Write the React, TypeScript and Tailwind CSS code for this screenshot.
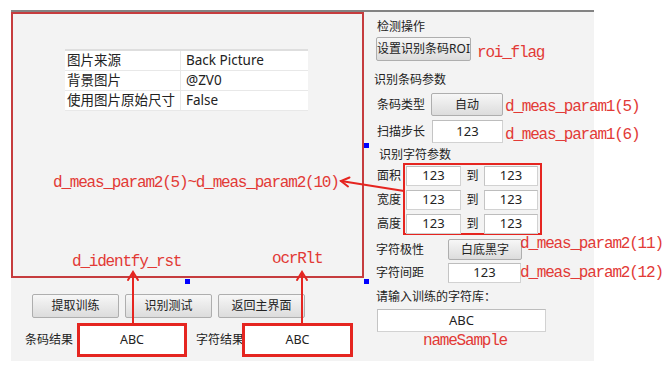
import React from "react";

const btn =
  "flex items-center justify-center whitespace-nowrap bg-linear-to-b from-[#f7f7f7] to-[#dcdcdc] border border-[#aeaeae] rounded-[2px] text-[12px] text-[#222]";
const input =
  "flex items-center justify-center bg-white border border-[#d2d2d2] border-t-[#bdbdbd] border-l-[#c4c4c4] text-[13px] text-[#222]";
const note =
  "absolute whitespace-nowrap font-['Liberation_Mono',monospace] text-[16px] leading-[18px] tracking-[-1.2px] text-[#e23a36]";

function Row({ label, children, w }: { label: string; children: React.ReactNode; w: string }) {
  return (
    <div className="flex items-center">
      <span className={`${w} text-[12px] leading-[16px]`}>{label}</span>
      {children}
    </div>
  );
}

export default function App() {
  return (
    <div className="relative w-[672px] h-[371px] bg-white overflow-hidden pl-[11px] pt-[10px] font-['Noto_Sans','Noto_Sans_CJK_SC',sans-serif] text-[#222]">
      <div className="w-[583px] h-[351px] bg-[#f3f3f3] border-t-2 border-[#838383] flex">
        {/* Left column */}
        <div className="w-[353px] flex flex-col">
          <div className="h-[266px] border-2 border-[#c63c3e]">
            <div className="mt-[35px] ml-[52px] w-[243px] bg-white border-t-2 border-[#dedede] text-[13.5px]">
              {[
                ["图片来源", "Back Picture"],
                ["背景图片", "@ZV0"],
                ["使用图片原始尺寸", "False"],
              ].map(([a, b]) => (
                <div key={a} className="flex h-[20px] border-b border-[#e8e8e8]">
                  <div className="w-[116px] pl-[2px] border-r border-[#e8e8e8] flex items-center whitespace-nowrap">{a}</div>
                  <div className="pl-[5px] flex items-center">{b}</div>
                </div>
              ))}
            </div>
          </div>
          <div className="mt-[16px] ml-[21px] flex gap-[6px]">
            <div className={`${btn} w-[87px] h-[24px]`}>提取训练</div>
            <div className={`${btn} w-[87px] h-[24px]`}>识别测试</div>
            <div className={`${btn} w-[87px] h-[24px]`}>返回主界面</div>
          </div>
          <div className="mt-[5px] flex items-center h-[34px]">
            <span className="ml-[14px] w-[48px] text-[12px]">条码结果</span>
            <div className="ml-[4px] w-[110px] h-[34px] border-[3px] border-[#e52520] bg-white flex items-center justify-center text-[12.5px]">ABC</div>
            <span className="ml-[9px] w-[46px] text-[12px] whitespace-nowrap">字符结果</span>
            <div className="w-[111px] h-[34px] border-[3px] border-[#e52520] bg-white flex items-center justify-center text-[12.5px]">ABC</div>
          </div>
        </div>

        {/* Right column */}
        <div className="w-[230px] flex flex-col">
          <div className="mt-[7px] ml-[13px] h-[16px] leading-[16px] text-[12px]">检测操作</div>
          <div className={`${btn} mt-[2px] ml-[12px] w-[95px] h-[24px]`}>设置识别条码ROI</div>
          <div className="mt-[11px] ml-[10px] h-[16px] leading-[16px] text-[12px]">识别条码参数</div>
          <div className="mt-[5px] ml-[13px]">
            <Row label="条码类型" w="w-[54px]">
              <div className={`${btn} w-[72px] h-[23px]`}>自动</div>
            </Row>
          </div>
          <div className="mt-[4px] ml-[13px]">
            <Row label="扫描步长" w="w-[55px]">
              <div className={`${input} w-[71px] h-[23px]`}>123</div>
            </Row>
          </div>
          <div className="mt-[5px] ml-[15px] h-[14px] leading-[14px] text-[12px]">识别字符参数</div>
          <div className="mt-[1px] ml-[13px] flex">
            <div className="w-[26px] flex flex-col pt-[3px] gap-[4px] text-[12px]">
              <div className="h-[20px] flex items-center">面积</div>
              <div className="h-[20px] flex items-center">宽度</div>
              <div className="h-[20px] flex items-center">高度</div>
            </div>
            <div className="w-[139px] h-[72px] border-2 border-[#e52520] pt-[1px] pl-[1px] flex flex-col gap-[4px]">
              {[0, 1, 2].map((i) => (
                <div key={i} className="flex items-center h-[20px]">
                  <div className={`${input} w-[55px] h-[20px]`}>123</div>
                  <div className="w-[23px] text-center text-[12px]">到</div>
                  <div className={`${input} w-[54px] h-[20px]`}>123</div>
                </div>
              ))}
            </div>
          </div>
          <div className="mt-[4px] ml-[12px] h-[21px]">
            <Row label="字符极性" w="w-[72px]">
              <div className={`${btn} w-[74px] h-[21px]`}>白底黑字</div>
            </Row>
          </div>
          <div className="mt-[3px] ml-[12px] h-[20px]">
            <Row label="字符间距" w="w-[72px]">
              <div className={`${input} w-[73px] h-[20px]`}>123</div>
            </Row>
          </div>
          <div className="mt-[6px] ml-[12px] h-[16px] leading-[16px] text-[12px]">请输入训练的字符库：</div>
          <div className={`${input} mt-[4px] ml-[13px] w-[169px] h-[23px]`}>ABC</div>
        </div>
      </div>

      {/* selection handles */}
      <div className="absolute left-[364px] top-[143px] w-[5px] h-[5px] bg-[#0000ff]" />
      <div className="absolute left-[185px] top-[279px] w-[5px] h-[5px] bg-[#0000ff]" />
      <div className="absolute left-[364px] top-[279px] w-[5px] h-[5px] bg-[#0000ff]" />

      {/* annotations */}
      <div className={`${note} left-[477px] top-[44px]`}>roi_flag</div>
      <div className={`${note} left-[505px] top-[98px]`}>d_meas_param1(5)</div>
      <div className={`${note} left-[505px] top-[126px]`}>d_meas_param1(6)</div>
      <div className={`${note} left-[520px] top-[235px]`}>d_meas_param2(11)</div>
      <div className={`${note} left-[520px] top-[264px]`}>d_meas_param2(12)</div>
      <div className={`${note} left-[423px] top-[332px]`}>nameSample</div>
      <div className={`${note} left-[53px] top-[174px]`}>d_meas_param2(5)~d_meas_param2(10)</div>
      <div className={`${note} left-[72px] top-[253px]`}>d_identfy_rst</div>
      <div className={`${note} left-[272px] top-[250px]`}>ocrRlt</div>

      <svg className="absolute left-0 top-0 pointer-events-none" width="672" height="371" viewBox="0 0 672 371">
        <g stroke="#e52520" strokeWidth="2" fill="none" strokeLinecap="round">
          <line x1="341" y1="181" x2="404" y2="191" />
          <polyline points="349.5,177.5 341,181 348,186.5" />
          <line x1="133" y1="323" x2="133" y2="273" />
          <polyline points="128,280 133,272 138,280" />
          <line x1="302" y1="324" x2="302" y2="273" />
          <polyline points="297,280 302,272 307,280" />
        </g>
      </svg>
    </div>
  );
}
